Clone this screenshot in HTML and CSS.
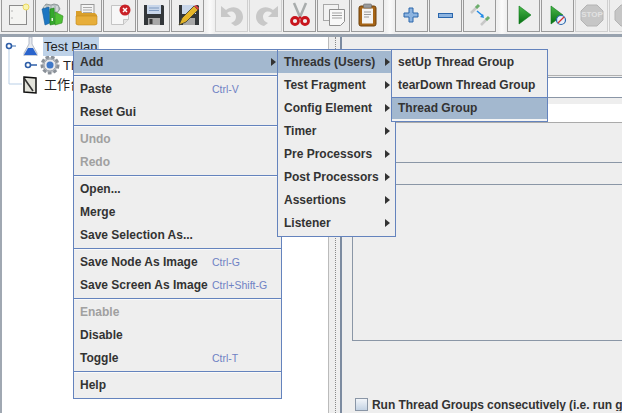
FILE: index.html
```html
<!DOCTYPE html>
<html lang="en">
<head>
<meta charset="utf-8">
<title>Apache JMeter</title>
<link rel="stylesheet" href="styles.css">
</head>
<body>
<div class="toolbar">
  <div class="btn"><svg class="ico" viewBox="0 0 31 31"><rect x="7.5" y="5.5" width="17" height="19" fill="#f4f4f2" stroke="#8c8c8c"/><circle cx="10" cy="11" r=".8" fill="#aaa"/><circle cx="10" cy="18" r=".8" fill="#aaa"/><circle cx="24" cy="7" r="3" fill="#f8f4b0" stroke="#ecd860"/></svg></div>
  <div class="btn"><svg class="ico" viewBox="0 0 31 31"><path d="M7 8l3-4 5 1 3-1 4 1 2 4-3 4H10z" fill="#b4bdbf" stroke="#7f8a8c" stroke-width=".8"/><path d="M9 6v5M13 6v5M17 6v5M21 6v5" stroke="#eef2f2"/><path d="M6 9l7-2 1 16-5 2z" fill="#1d76c2" stroke="#125a98" stroke-width=".6"/><path d="M14 9l4-1 1 16-5 1z" fill="#35a82c" stroke="#1f7d1a" stroke-width=".6"/><path d="M19 12l8 4-1 7-7 2z" fill="#4fc035" stroke="#2f8a22" stroke-width=".6"/><rect x="15.5" y="18" width="1.5" height="3" fill="#e8f4e0"/></svg></div>
  <div class="btn"><svg class="ico" viewBox="0 0 31 31"><rect x="11" y="4.5" width="13" height="12" fill="#f4f4f4" stroke="#999"/><path d="M13 7.500h9M13 10h9M13 12.500h9" stroke="#aaa"/><path d="M6 11h5l1 2h13l2 2v9l-2 1H8l-2-1z" fill="#d99f2b"/><path d="M6 16h21v8l-2 1H8l-2-1z" fill="#e7ae3a" stroke="#c58a1d" stroke-width=".6"/></svg></div>
  <div class="btn"><svg class="ico" viewBox="0 0 31 31"><path d="M7.500 5.500h17v14l-5 5h-12z" fill="#f7f7f7" stroke="#c4c4c4"/><path d="M19.500 24.500v-5h5" fill="#e4e4e4" stroke="#c4c4c4"/><circle cx="21" cy="10" r="5.500" fill="#c92127"/><path d="M19 8l4 4M23 8l-4 4" stroke="#fff" stroke-width="1.500"/></svg></div>
  <div class="btn"><svg class="ico" viewBox="0 0 31 31"><path d="M6 5h19l1 1v19H6z" fill="#33373a"/><rect x="9" y="5" width="14" height="9" fill="#c8d6ea"/><path d="M11 8h10M11 10.500h10" stroke="#7f9ac0"/><rect x="10" y="18" width="12" height="7" fill="#a8a8a8"/><rect x="11.500" y="19" width="3" height="5" fill="#3c3c3c"/></svg></div>
  <div class="btn"><svg class="ico" viewBox="0 0 31 31"><path d="M7 5h19l1 1v19H7z" fill="#33373a"/><rect x="10" y="5" width="14" height="9" fill="#c8d6ea"/><rect x="11" y="18" width="12" height="7" fill="#a8a8a8"/><path d="M7 25l3-7 12-12 4 4-12 12z" fill="#e5b52a" stroke="#3a3a2a" stroke-width=".8"/><path d="M22 6l4 4 1-2-3-3z" fill="#d84040"/></svg></div>
  <div class="gap"></div>
  <div class="btn btn-off"><svg class="ico" viewBox="0 0 31 31"><path d="M5 6v11h10l-4-4c4-3 9-1 9 4 0 3-2 5-5 6l4 3c5-1 8-5 8-9 0-9-10-13-17-7z" fill="#c8c8c8"/></svg></div>
  <div class="btn btn-off"><svg class="ico" viewBox="0 0 31 31"><path d="M28 6v11H18l4-4c-4-3-9-1-9 4 0 3 2 5 5 6l-4 3c-5-1-8-5-8-9 0-9 10-13 17-7z" fill="#c8c8c8"/></svg></div>
  <div class="btn"><svg class="ico" viewBox="0 0 31 31"><path d="M10 3l6 14M22 3l-6 14" stroke="#a8acac" stroke-width="2.500"/><circle cx="11" cy="21" r="3.500" fill="none" stroke="#c8141c" stroke-width="2.800"/><circle cx="21" cy="21" r="3.500" fill="none" stroke="#c8141c" stroke-width="2.800"/><path d="M14 18l2-2 2 2-2 1z" fill="#c8141c"/></svg></div>
  <div class="btn"><svg class="ico" viewBox="0 0 31 31"><rect x="5.500" y="4.500" width="15" height="16" fill="#f2f2f2" stroke="#a8a8a8"/><path d="M11.500 9.500h15v12l-4 4h-11z" fill="#f8f8f8" stroke="#8e8e8e"/><path d="M14 13h10M14 15.500h10M14 18h10" stroke="#a0a0a0"/></svg></div>
  <div class="btn"><svg class="ico" viewBox="0 0 31 31"><rect x="7" y="6" width="17" height="20" rx="2" fill="#a76516" stroke="#6d400c"/><rect x="10" y="8.500" width="11" height="15" fill="#f4f4f4"/><rect x="11.500" y="4" width="8" height="4" rx="1" fill="#9a9a9a" stroke="#666" stroke-width=".6"/><path d="M12 12h7M12 14.500h7M12 17h5" stroke="#9a9a9a"/></svg></div>
  <div class="gap"></div>
  <div class="btn"><svg class="ico" viewBox="0 0 31 31"><path d="M13.500 8.500h4v5h5v4h-5v5h-4v-5h-5v-4h5z" transform="translate(-.500 -.500)" fill="#8db4e0" stroke="#2a66ac"/></svg></div>
  <div class="btn"><svg class="ico" viewBox="0 0 31 31"><rect x="8.500" y="13.500" width="14" height="4" fill="#8db4e0" stroke="#2a66ac"/></svg></div>
  <div class="btn"><svg class="ico" viewBox="0 0 31 31"><path d="M7 13l6-6" stroke="#c8c8c8" stroke-width="2.500"/><path d="M12 8l3-3" stroke="#6cae6c" stroke-width="3"/><path d="M17 25l6-6" stroke="#c8c8c8" stroke-width="2.500"/><path d="M22 20l3-3" stroke="#6cae6c" stroke-width="3"/><path d="M13 11l6 5" stroke="#1f8ae8" stroke-width="1.500"/><path d="M20 18l-4-1 3-3z" fill="#1f8ae8"/></svg></div>
  <div class="gap"></div>
  <div class="btn"><svg class="ico" viewBox="0 0 31 31"><defs><linearGradient id="go" x1="0" y1="0" x2="0" y2="1"><stop offset="0" stop-color="#4ab84a"/><stop offset="1" stop-color="#066f12"/></linearGradient></defs><path d="M11 6l12 9-12 9z" fill="url(#go)" stroke="#0a7a18" stroke-width=".6"/></svg></div>
  <div class="btn"><svg class="ico" viewBox="0 0 31 31"><path d="M9 6l12 9-12 9z" fill="url(#go)" stroke="#0a7a18" stroke-width=".6"/><circle cx="19" cy="20" r="4.500" fill="#e8f0fa" stroke="#2a66ac" stroke-width="1.200"/><path d="M16 23l6-6" stroke="#d83030" stroke-width="1.200"/></svg></div>
  <div class="btn btn-off"><svg class="ico" viewBox="0 0 31 31"><path d="M11 5h10l6 6v9l-6 6h-10l-6-6v-9z" fill="#c6c6c6" stroke="#b4b4b4"/></svg><span class="stop">STOP</span></div>
  <div class="btn btn-off"><svg class="ico" viewBox="0 0 31 31"><path d="M11 5h10l6 6v9l-6 6h-10l-6-6v-9z" fill="#c6c6c6" stroke="#b4b4b4"/></svg></div>
</div>

<div class="workspace">
  <div class="tree">
    <div class="tree-row">
      <svg class="node-a" viewBox="2 0 41 19"><path d="M9 8v11" stroke="#b9cfe6"/><path d="M9 9h7" stroke="#5a86c0" stroke-width="1.200"/><circle cx="9" cy="9" r="2.500" fill="#fff" stroke="#2f5fa8" stroke-width="1.600"/><path d="M29 0h3v7l5 9v3H24v-3l5-9z" fill="#e6e9ee" stroke="#9aa4b4" stroke-width=".7"/><path d="M28 11h5l4 7H24z" fill="#2a64cc"/></svg>
      <span class="tree-label tree-selected">Test Plan</span>
    </div>
    <div class="tree-row">
      <svg class="node-b" viewBox="2 0 60 19"><path d="M9 0v19" stroke="#b9cfe6"/><path d="M28 9h9" stroke="#2f5fa8" stroke-width="1.500"/><circle cx="28" cy="9" r="2.500" fill="#fff" stroke="#2f5fa8" stroke-width="1.600"/><circle cx="50" cy="9" r="8" fill="#c4c8cc" stroke="#8a9098" stroke-width="3" stroke-dasharray="3.500 2"/><circle cx="50" cy="9" r="6" fill="#e8e8ea" stroke="#9aa0a8"/><circle cx="50" cy="9" r="3.500" fill="#3f78c8"/></svg>
      <span class="tree-label tree-clipped">Thread Group</span>
    </div>
    <div class="tree-row">
      <svg class="node-a" viewBox="2 0 41 19"><path d="M9 0v9h13" fill="none" stroke="#b9cfe6"/><path d="M24 2l12 1v15l-12-1z" fill="#e4e4dc" stroke="#111" stroke-width="1.500"/><path d="M24 3l9 13" stroke="#333" stroke-width="1.600"/></svg>
      <span class="tree-label tree-clipped">工作台</span>
    </div>
  </div>
  <div class="divider"><div class="grip"></div></div>
  <div class="panel">
    <div class="panel-rule"></div>
    <div class="field field-first"></div>
    <div class="field"></div>
    <div class="group-box">
      <div class="group-band"></div>
    </div>
    <label class="check-row"><span class="check"></span><span class="check-text">Run Thread Groups consecutively (i.e. run groups one at a time)</span></label>
  </div>
</div>

<div class="menu menu-main">
  <div class="item item-active"><span class="label">Add</span><span class="arrow"></span></div>
  <div class="sep"></div>
  <div class="item"><span class="label">Paste</span><span class="key">Ctrl-V</span></div>
  <div class="item"><span class="label">Reset Gui</span></div>
  <div class="sep"></div>
  <div class="item item-off"><span class="label">Undo</span></div>
  <div class="item item-off"><span class="label">Redo</span></div>
  <div class="sep"></div>
  <div class="item"><span class="label">Open...</span></div>
  <div class="item"><span class="label">Merge</span></div>
  <div class="item"><span class="label">Save Selection As...</span></div>
  <div class="sep"></div>
  <div class="item"><span class="label">Save Node As Image</span><span class="key">Ctrl-G</span></div>
  <div class="item"><span class="label">Save Screen As Image</span><span class="key">Ctrl+Shift-G</span></div>
  <div class="sep"></div>
  <div class="item item-off"><span class="label">Enable</span></div>
  <div class="item"><span class="label">Disable</span></div>
  <div class="item"><span class="label">Toggle</span><span class="key">Ctrl-T</span></div>
  <div class="sep"></div>
  <div class="item"><span class="label">Help</span></div>
</div>

<div class="menu menu-sub">
  <div class="item item-active"><span class="label">Threads (Users)</span><span class="arrow"></span></div>
  <div class="item"><span class="label">Test Fragment</span><span class="arrow"></span></div>
  <div class="item"><span class="label">Config Element</span><span class="arrow"></span></div>
  <div class="item"><span class="label">Timer</span><span class="arrow"></span></div>
  <div class="item"><span class="label">Pre Processors</span><span class="arrow"></span></div>
  <div class="item"><span class="label">Post Processors</span><span class="arrow"></span></div>
  <div class="item"><span class="label">Assertions</span><span class="arrow"></span></div>
  <div class="item"><span class="label">Listener</span><span class="arrow"></span></div>
</div>

<div class="menu menu-threads">
  <div class="item"><span class="label">setUp Thread Group</span></div>
  <div class="item"><span class="label">tearDown Thread Group</span></div>
  <div class="item item-active item-last"><span class="label">Thread Group</span></div>
</div>
</body>
</html>
```

FILE: styles.css
```css
* { box-sizing: border-box; }

html, body {
  margin: 0;
  width: 622px;
  height: 413px;
  overflow: hidden;
}

body {
  position: relative;
  background: #eeeeee;
  color: #333;
  font: bold 12px "Liberation Sans", Arial, sans-serif;
  white-space: nowrap;
}

/* Toolbar */
.toolbar {
  display: flex;
  height: 37px;
  padding-left: 1px;
  background: linear-gradient(#eeeeee, #f4f4f4 80%, #f0f0f0);
  border-bottom: 3px solid #98a2ae;
  overflow: hidden;
}

.btn {
  position: relative;
  flex: none;
  width: 33px;
  height: 32px;
  margin-right: 1px;
  border: 1px solid #9a9a9a;
  border-top: 0;
  background: #eeeeee;
}

.btn-off { border-color: #cfcfcf; }

.ico {
  display: block;
  width: 31px;
  height: 31px;
}

.stop {
  position: absolute;
  left: 5px;
  top: 10px;
  width: 22px;
  text-align: center;
  font-size: 8px;
  color: #e2e2e2;
}

.gap {
  flex: none;
  width: 10px;
  background: linear-gradient(90deg, #eeeeee, #fafafa 50%, #eeeeee);
}

/* Split layout */
.workspace {
  display: flex;
  height: 376px;
}

.tree {
  flex: none;
  width: 329px;
  background: #fff;
  border-left: 2px solid #a0a8b2;
  border-right: 1px solid #bbbbbb;
  font-weight: normal;
  font-size: 13px;
  color: #222;
}

.tree-row {
  display: flex;
  align-items: center;
  height: 19px;
}

.node-a { flex: none; width: 41px; height: 19px; }
.node-b { flex: none; width: 60px; height: 19px; }

.tree-label {
  padding: 0 1px;
  line-height: 19px;
  font-family: "Liberation Sans", "Noto Sans CJK SC", sans-serif;
}

.tree-selected {
  width: 56px;
  background: #bed2e8;
}

.tree-clipped {
  overflow: hidden;
}

.tree-row:nth-child(2) .tree-clipped { width: 11px; }
.tree-row:nth-child(3) .tree-clipped { width: 30px; }

.divider {
  flex: none;
  width: 11px;
  padding-left: 6px;
}

.grip {
  height: 100%;
  border-left: 1px dotted #888;
}

.panel {
  flex: 1;
  min-width: 0;
  border-left: 2px solid #7c8ba0;
  padding-left: 10px;
}

.panel-rule {
  height: 2px;
  margin: 38px 0 0 -10px;
  border-top: 1px solid #b0b0b0;
}

.field {
  height: 20px;
  background: #fff;
  border-top: 1px solid #8a96a6;
}

.field-first { height: 21px; margin-bottom: 6px; border-bottom: 1px solid #8a96a6; }
.field:not(.field-first) { border-top: 0; height: 18px; }

.group-box {
  height: 219px;
  padding-top: 39px;
  border-top: 1px solid #aaaaaa;
  border-left: 1px solid #8a96a6;
  border-bottom: 1px solid #8a96a6;
}

.group-band {
  height: 23px;
  border-top: 1px solid #8a96a6;
  border-bottom: 1px solid #8a96a6;
}

.check-row {
  display: flex;
  align-items: center;
  gap: 4px;
  height: 13px;
  margin: 57px 0 0 3px;
  font-weight: bold;
  overflow: hidden;
}

.check-text {
  min-width: 0;
  overflow: hidden;
  letter-spacing: -0.05px;
}

.check {
  flex: none;
  width: 13px;
  height: 13px;
  border: 1px solid #8a96a6;
  background: linear-gradient(#f2f5f9, #c4d3e4);
}

/* Popup menus */
.menu {
  position: absolute;
  top: 49px;
  padding-bottom: 2px;
  background: #eeeeee;
  border: 1px solid #6483bd;
}

.menu-main { left: 73px; width: 209px; }
.menu-sub { left: 277px; width: 119px; }
.menu-threads { left: 391px; width: 157px; padding-bottom: 0; }

.item {
  display: flex;
  align-items: center;
  height: 23px;
  padding-left: 6px;
}

.label { flex: none; }

.menu-main .label { width: 132px; }

.item-active {
  background: #a3b8cf;
  box-shadow: inset 0 1px 0 #eeeeee;
}

.item-last {
  height: 24px;
  margin-top: 1px;
  box-shadow: inset 0 1px 0 #6483bd, inset 0 -2px 0 #f4f4f4;
  padding-bottom: 2px;
}

.item-off { color: #a0a0a0; }

.key {
  font-weight: normal;
  font-size: 10.5px;
  color: #6f82c4;
}

.arrow {
  margin-left: auto;
  margin-right: 5px;
  width: 0;
  height: 0;
  border-left: 5px solid #333;
  border-top: 4.500px solid transparent;
  border-bottom: 4.500px solid transparent;
}

.sep {
  height: 2px;
  margin: 2px 0 0;
  border-top: 1px solid #6483bd;
  border-bottom: 1px solid #fafafa;
}
```
